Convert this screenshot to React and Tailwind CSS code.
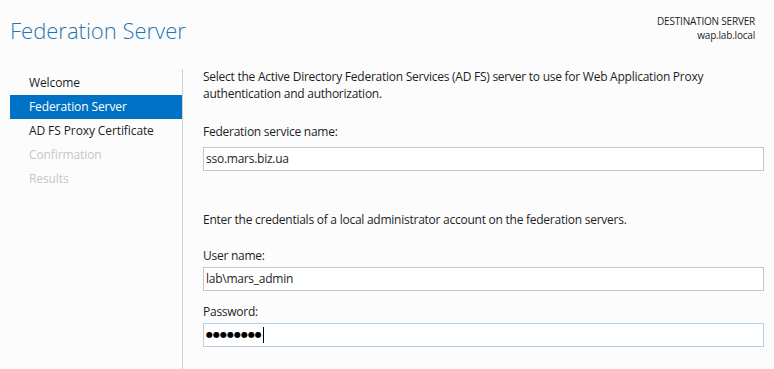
import React from 'react';

const steps = [
  { label: 'Welcome', state: 'done' },
  { label: 'Federation Server', state: 'active' },
  { label: 'AD FS Proxy Certificate', state: 'done' },
  { label: 'Confirmation', state: 'disabled' },
  { label: 'Results', state: 'disabled' },
];

export default function App() {
  return (
    <div className="w-[774px] h-[369px] bg-[#fcfcfc] overflow-hidden font-['Open_Sans',sans-serif] text-[#1e1e1e]">
      {/* Header */}
      <div className="flex justify-between h-[60px]">
        <h1 className="pl-[10px] pt-[14px] text-[22px] font-light leading-[32px] text-[#1f77b3] tracking-[0px]">
          Federation Server
        </h1>
        <div className="pr-[19px] pt-[14px] text-right text-[10px] leading-[14px] tracking-[-0.2px]">
          <div>DESTINATION SERVER</div>
          <div>wap.lab.local</div>
        </div>
      </div>

      <div className="flex">
        {/* Step nav */}
        <div className="w-[172px] ml-[10px] pt-[11px] flex flex-col">
          {steps.map((s) => (
            <div
              key={s.label}
              className={
                'h-[24px] pl-[19px] flex items-center text-[12px] tracking-[-0.1px] ' +
                (s.state === 'active'
                  ? 'bg-[#0072c6] text-white'
                  : s.state === 'disabled'
                  ? 'text-[#c6c6c6]'
                  : 'text-[#1e1e1e]')
              }
            >
              {s.label}
            </div>
          ))}
        </div>

        <div className="w-px h-[300px] mt-[9px] bg-[#cfcfcf]" />

        {/* Content */}
        <div className="flex-1 pl-[20px] pr-[10px] pt-[8px] text-[12px] tracking-[-0.25px]">
          <p className="leading-[17px]">
            Select the Active Directory Federation Services (AD FS) server to use for Web Application Proxy
            <br />
            authentication and authorization.
          </p>

          <div className="mt-[21px] leading-[17px]">Federation service name:</div>
          <div className="mt-[7px] h-[24px] border border-[#c6c6c6] bg-white flex items-center px-[2px]">
            sso.mars.biz.ua
          </div>

          <p className="mt-[40px] leading-[17px]">
            Enter the credentials of a local administrator account on the federation servers.
          </p>

          <div className="mt-[19px] leading-[17px]">User name:</div>
          <div className="mt-[3px] h-[24px] border border-[#c6c6c6] bg-white flex items-center px-[2px]">
            lab\mars_admin
          </div>

          <div className="mt-[12px] leading-[17px]">Password:</div>
          <div className="mt-[3px] h-[24px] border border-[#b5cfe6] bg-white flex items-center pl-[2px]">
            <span className="text-[8px] tracking-[0px] text-black font-['DejaVu_Sans',sans-serif]">●●●●●●●●</span>
            <span className="w-px h-[16px] bg-black ml-px" />
          </div>
        </div>
      </div>
    </div>
  );
}
